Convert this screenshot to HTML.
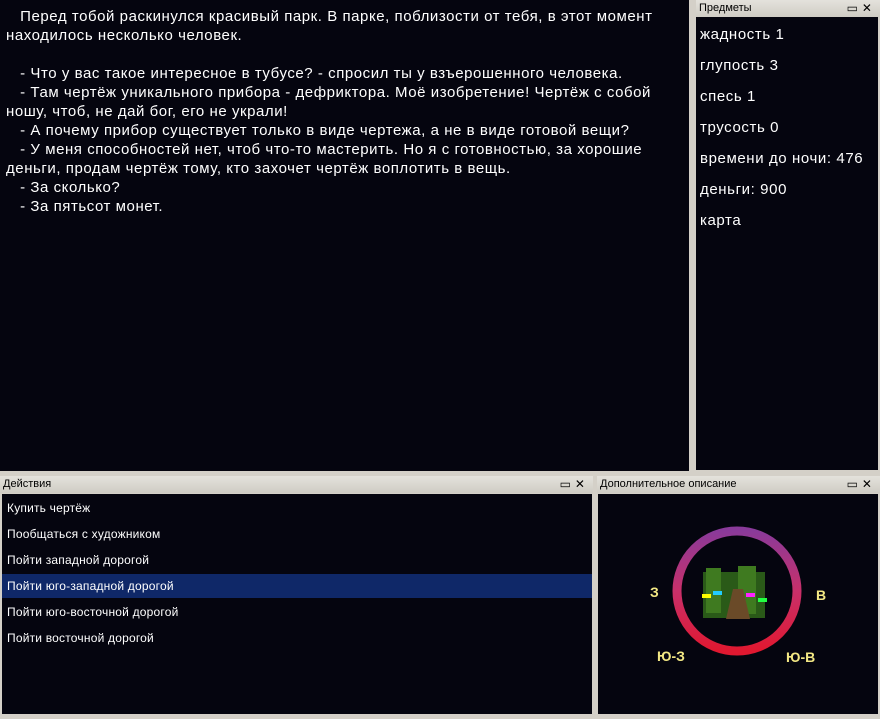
<!DOCTYPE html>
<html><head><meta charset="utf-8"><style>
body{margin:0;width:880px;height:718px;background:#d4d0c8;position:relative;overflow:hidden;font-family:"Liberation Sans","DejaVu Sans",sans-serif}
.p{position:absolute;background:#05050f;color:#fff}
.t{position:absolute;height:17px;background:linear-gradient(#e4e2dc,#cfccc4);font-size:11px;color:#000;line-height:17px;padding-left:3px;box-sizing:border-box}
.t span{position:absolute;right:4px;top:0;font-size:12px;letter-spacing:4px}
#main{left:0;top:0;width:689px;height:471px;font-size:15px;line-height:19px;padding:7px 6px;box-sizing:border-box;letter-spacing:0.55px}
#main p{margin:0}
#items{left:696px;top:17px;width:182px;height:453px;font-size:15px;padding:9px 4px;box-sizing:border-box;letter-spacing:0.6px}
#items div{height:31px}
#act{left:2px;top:494px;width:590px;height:220px;font-size:12px;letter-spacing:0.2px}
#act div{height:24px;line-height:24px;padding-left:5px;margin-bottom:2px}
#act .s{background:#0f2868}
#desc{left:598px;top:494px;width:280px;height:220px}
</style></head><body>
<div class="p" id="main"><p>&nbsp;&nbsp;&nbsp;Перед тобой раскинулся красивый парк. В парке, поблизости от тебя, в этот момент находилось несколько человек.</p><p>&nbsp;</p>
<p>&nbsp;&nbsp;&nbsp;- Что у вас такое интересное в тубусе? - спросил ты у взъерошенного человека.</p>
<p>&nbsp;&nbsp;&nbsp;- Там чертёж уникального прибора - дефриктора. Моё изобретение! Чертёж с собой ношу, чтоб, не дай бог, его не украли!</p>
<p>&nbsp;&nbsp;&nbsp;- А почему прибор существует только в виде чертежа, а не в виде готовой вещи?</p>
<p>&nbsp;&nbsp;&nbsp;- У меня способностей нет, чтоб что-то мастерить. Но я с готовностью, за хорошие деньги, продам чертёж тому, кто захочет чертёж воплотить в вещь.</p>
<p>&nbsp;&nbsp;&nbsp;- За сколько?</p><p>&nbsp;&nbsp;&nbsp;- За пятьсот монет.</p></div>
<div class="t" style="left:696px;top:0;width:184px">Предметы<span>▭✕</span></div>
<div class="p" id="items"><div>жадность 1</div><div>глупость 3</div><div>спесь 1</div><div>трусость 0</div><div>времени до ночи: 476</div><div>деньги: 900</div><div>карта</div></div>
<div class="t" style="left:0;top:476px;width:593px">Действия<span>▭✕</span></div>
<div class="p" id="act" style="padding-top:2px;box-sizing:border-box"><div>Купить чертёж</div><div>Пообщаться с художником</div><div>Пойти западной дорогой</div><div class="s">Пойти юго-западной дорогой</div><div>Пойти юго-восточной дорогой</div><div>Пойти восточной дорогой</div></div>
<div class="t" style="left:597px;top:476px;width:283px">Дополнительное описание<span>▭✕</span></div>
<div class="p" id="desc"><svg width="280" height="220">
<defs><linearGradient id="g" x1="0" y1="0" x2="0" y2="1"><stop offset="0" stop-color="#8a3a9a"/><stop offset="0.5" stop-color="#c8306a"/><stop offset="1" stop-color="#e01830"/></linearGradient></defs>
<circle cx="139" cy="97" r="60" fill="none" stroke="url(#g)" stroke-width="9"/>
<rect x="105" y="78" width="62" height="46" fill="#2a5a18"/>
<rect x="108" y="74" width="15" height="45" fill="#3f7a20"/><rect x="140" y="72" width="18" height="48" fill="#3f7a20"/>
<path d="M128 125 L135 95 L145 95 L152 125Z" fill="#6a4a28"/>
<rect x="104" y="100" width="9" height="4" fill="#ff0"/><rect x="115" y="97" width="9" height="4" fill="#2cf"/><rect x="148" y="99" width="9" height="4" fill="#f2f"/><rect x="160" y="104" width="9" height="4" fill="#2f4"/>
<g fill="#f3e884" font-weight="bold" font-size="14" font-family="Liberation Sans,sans-serif"><text x="52" y="103">З</text><text x="218" y="106">В</text><text x="59" y="167">Ю-З</text><text x="188" y="168">Ю-В</text></g>
</svg></div>
</body></html>
